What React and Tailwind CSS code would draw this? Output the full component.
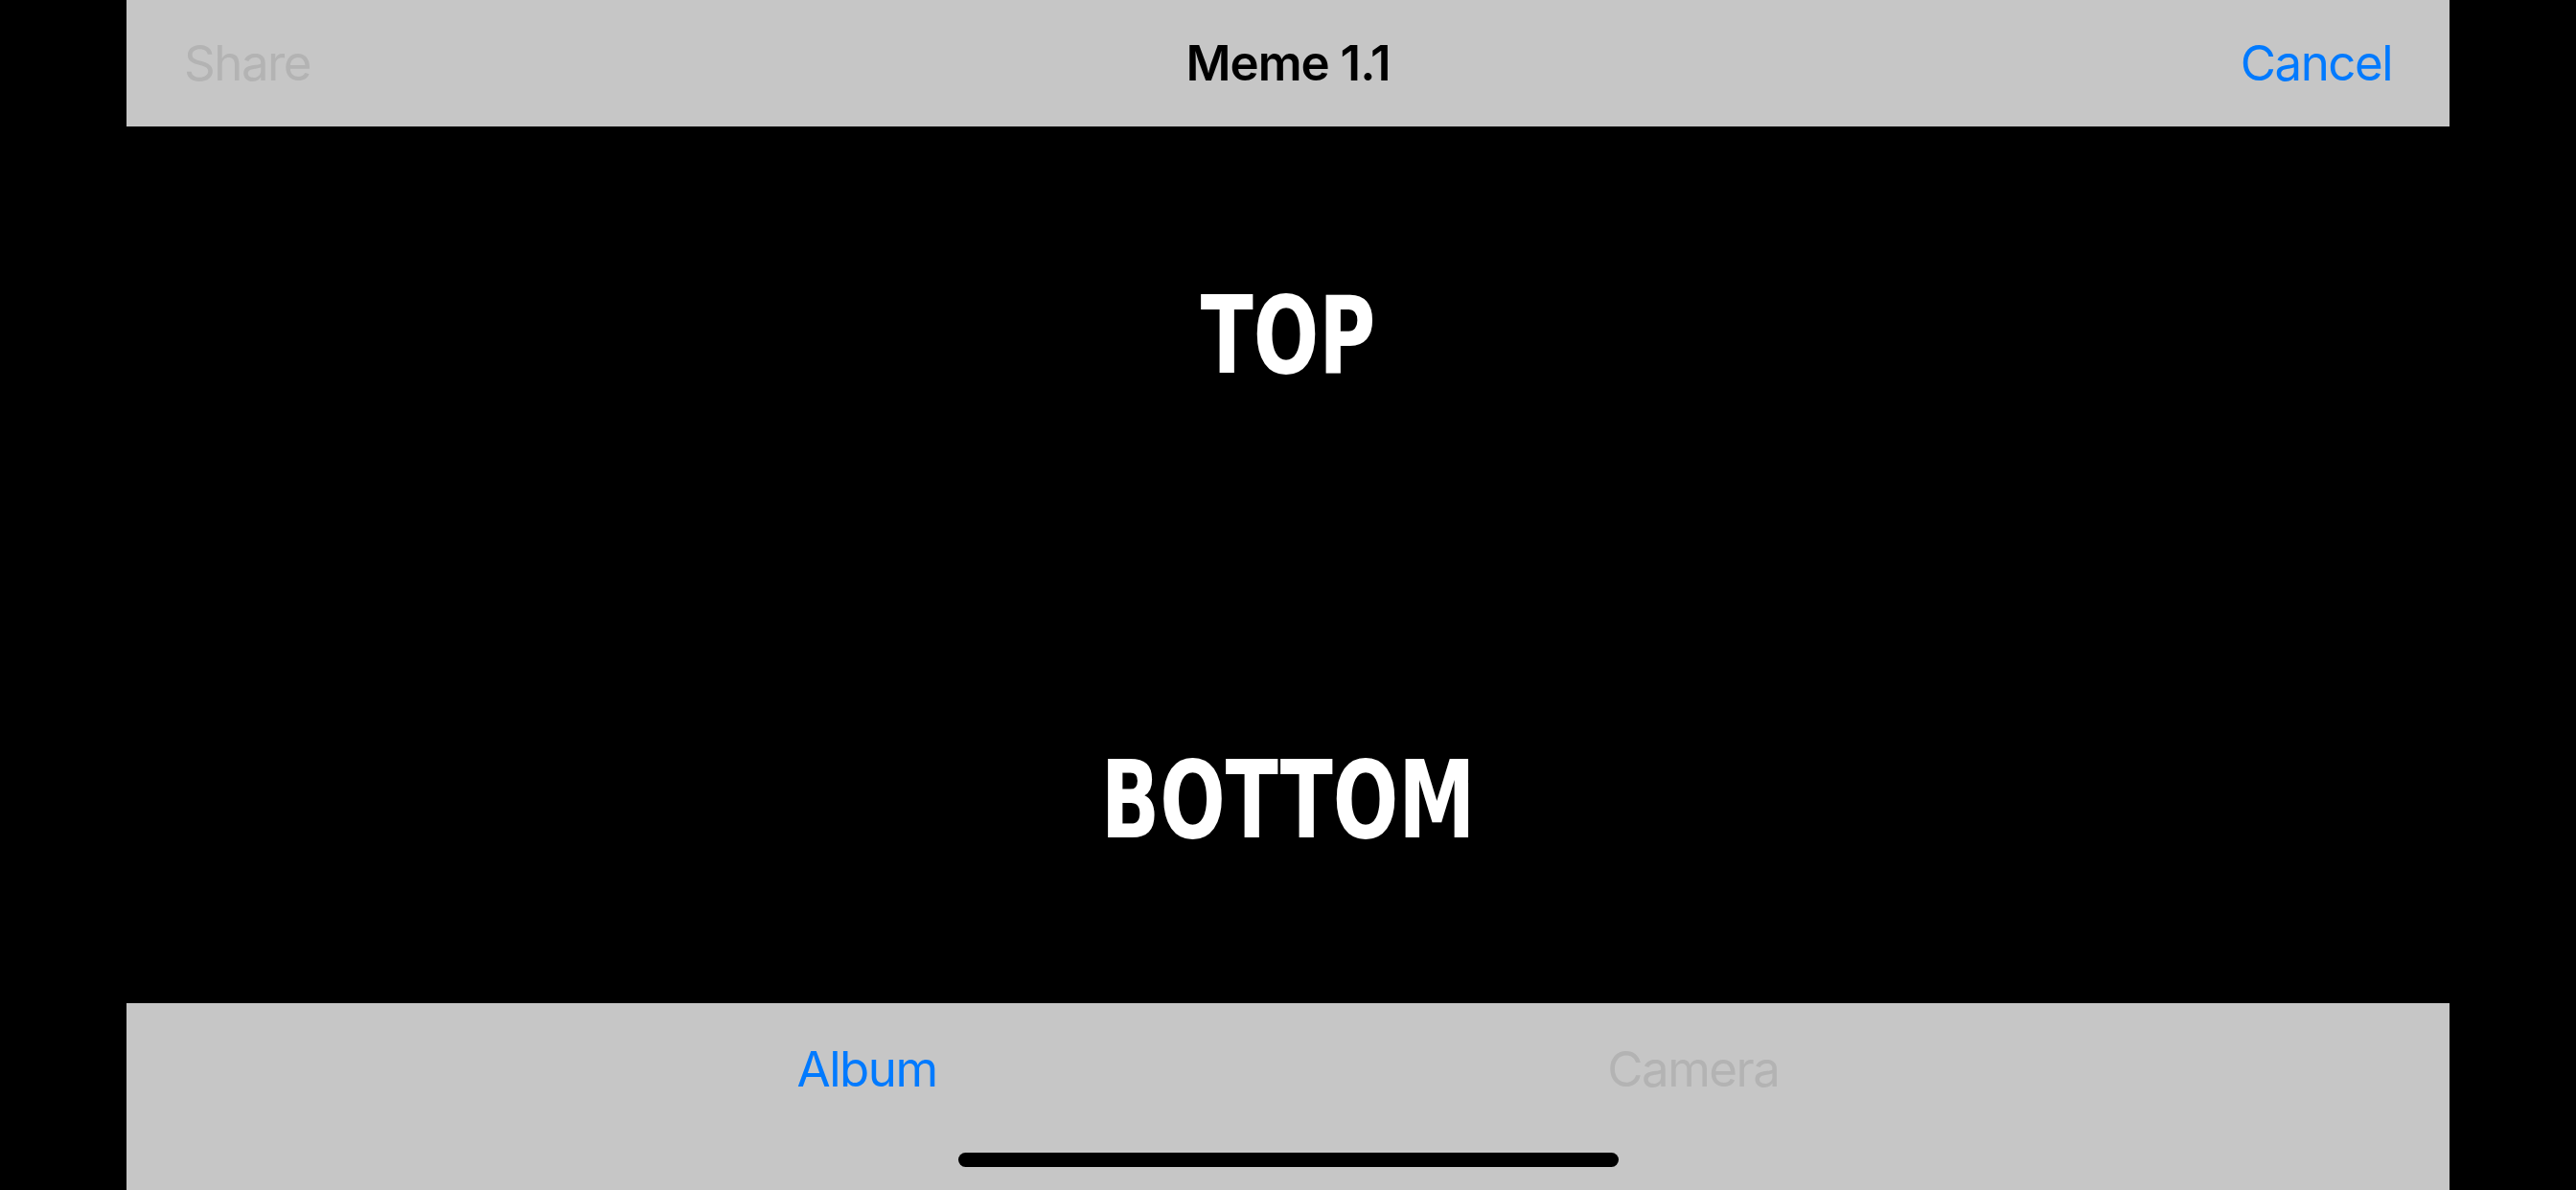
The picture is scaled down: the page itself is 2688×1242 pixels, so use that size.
import React from 'react';

const uiFont = { fontFamily: 'Inter, "Liberation Sans", sans-serif' };
const memeFont = { fontFamily: '"Liberation Sans Narrow", "DejaVu Sans Condensed", "DejaVu Sans", sans-serif' };

const MemeEditor = () => {
    return (
        <div className="w-[2688px] h-[1242px] bg-black flex justify-center" style={uiFont}>
            <div className="w-[2424px] h-full flex flex-col">
                {/* Navigation bar */}
                <div className="h-[132px] bg-[#c6c6c6] grid grid-cols-[1fr_auto_1fr] items-center px-[60px] text-[51px] tracking-[-1.5px]">
                    <span className="justify-self-start text-[#b3b3b3]">Share</span>
                    <span className="font-semibold text-black tracking-[-1px]">Meme 1.1</span>
                    <span className="justify-self-end text-[#007aff]">Cancel</span>
                </div>

                {/* Image area */}
                <div
                    className="flex-1 bg-black flex flex-col items-center justify-between pt-[162px] pb-[156px] text-white font-bold text-[112px] leading-none"
                    style={memeFont}
                >
                    <span className="inline-block scale-x-[0.8]">TOP</span>
                    <span className="inline-block scale-x-[0.8]">BOTTOM</span>
                </div>

                {/* Toolbar */}
                <div className="h-[195px] bg-[#c6c6c6] flex flex-col">
                    <div className="h-[134px] flex items-center pt-[4px] text-[51px] tracking-[-1.5px]">
                        <div className="flex-1" />
                        <span className="text-[#007aff]">Album</span>
                        <div className="flex-1" />
                        <span className="text-[#b3b3b3]">Camera</span>
                        <div className="flex-1" />
                    </div>
                    <div className="mt-[22px] self-center w-[689px] h-[15px] rounded-full bg-black" />
                </div>
            </div>
        </div>
    );
};

export default MemeEditor;
